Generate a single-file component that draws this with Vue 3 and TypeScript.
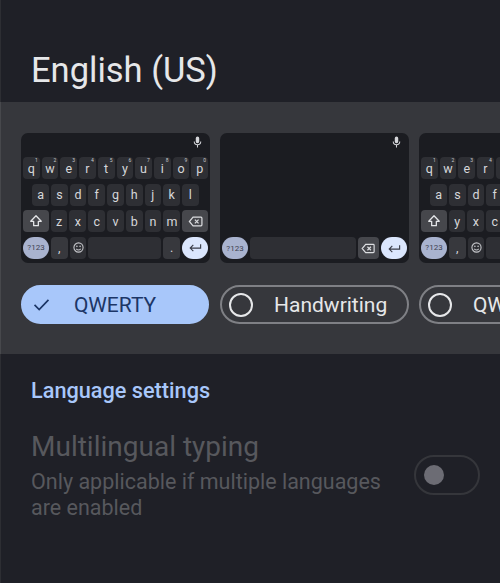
<script setup lang="ts">
type KeyKind = 'char' | 'shift' | 'del' | 'sym' | 'comma' | 'emoji' | 'space' | 'dot' | 'enter'
interface Key { kind: KeyKind; label?: string; hint?: string }

const chars = (s: string, hints = false): Key[] =>
  s.split('').map((c, i) => ({ kind: 'char' as KeyKind, label: c, hint: hints ? String((i + 1) % 10) : undefined }))

const bottomRow: Key[] = [
  { kind: 'sym', label: '?123' },
  { kind: 'comma', label: ',' },
  { kind: 'emoji' },
  { kind: 'space' },
  { kind: 'dot', label: '.' },
  { kind: 'enter' },
]

const qwerty: Key[][] = [
  chars('qwertyuiop', true),
  chars('asdfghjkl'),
  [{ kind: 'shift' }, ...chars('zxcvbnm'), { kind: 'del' }],
  bottomRow,
]
const qwerty2: Key[][] = [
  chars('qwertzuiop', true),
  chars('asdfghjkl'),
  [{ kind: 'shift' }, ...chars('yxcvbnm'), { kind: 'del' }],
  bottomRow,
]

const layouts = [
  { name: 'QWERTY', selected: true, rows: qwerty, hand: false },
  { name: 'Handwriting', selected: false, rows: [] as Key[][], hand: true },
  { name: 'QWERTZ', selected: false, rows: qwerty2, hand: false },
]
</script>

<template>
  <div class="page">
    <h1 class="title">English (US)</h1>

    <section class="panel">
      <div class="layouts">
        <div v-for="l in layouts" :key="l.name" class="layout">
          <div class="kb">
            <div class="kb-top">
              <svg class="mic" viewBox="0 0 24 24" width="13" height="16">
                <path fill="#d5d6da" d="M12 14.5a3.2 3.2 0 0 0 3.2-3.2V5.2a3.2 3.2 0 0 0-6.4 0v6.1a3.2 3.2 0 0 0 3.2 3.2z" />
                <path fill="none" stroke="#d5d6da" stroke-width="1.9" d="M6 11.2a6 6 0 0 0 12 0M12 17.2V22" />
              </svg>
            </div>

            <div v-if="l.hand" class="hand-area">
              <div class="hand-row">
                <div class="k sym">?123</div>
                <div class="k hand-space"></div>
                <div class="k del-small">
                  <svg viewBox="0 0 24 18" width="14" height="11">
                    <path fill="none" stroke="#dcdde0" stroke-width="2" d="M8 2h13a1.5 1.5 0 0 1 1.5 1.5v11A1.5 1.5 0 0 1 21 16H8l-6-7z" />
                    <path fill="none" stroke="#dcdde0" stroke-width="2" d="M11 6l6 6M17 6l-6 6" />
                  </svg>
                </div>
                <div class="k enter">
                  <svg viewBox="0 0 24 16" width="14" height="9">
                    <path fill="none" stroke="#3a3d48" stroke-width="2" d="M22 2v7H4M9 3.5L3.5 9 9 14.5" />
                  </svg>
                </div>
              </div>
            </div>

            <div v-else class="rows">
              <div v-for="(row, ri) in l.rows" :key="ri" class="row" :class="{ inset: ri === 1 }">
                <div v-for="(k, ki) in row" :key="ki" class="k" :class="k.kind">
                  <template v-if="k.kind === 'shift'">
                    <svg viewBox="0 0 24 24" width="14" height="14">
                      <path fill="none" stroke="#e4e5e8" stroke-width="2.2" stroke-linejoin="round" d="M12 3L3 12.5h5V20h8v-7.5h5z" />
                    </svg>
                  </template>
                  <template v-else-if="k.kind === 'del'">
                    <svg viewBox="0 0 24 18" width="15" height="11">
                      <path fill="none" stroke="#dcdde0" stroke-width="2" d="M8 2h13a1.5 1.5 0 0 1 1.5 1.5v11A1.5 1.5 0 0 1 21 16H8l-6-7z" />
                      <path fill="none" stroke="#dcdde0" stroke-width="2" d="M11 6l6 6M17 6l-6 6" />
                    </svg>
                  </template>
                  <template v-else-if="k.kind === 'emoji'">
                    <svg viewBox="0 0 24 24" width="11" height="11">
                      <circle cx="12" cy="12" r="10" fill="none" stroke="#c4c5c9" stroke-width="2.4" />
                      <circle cx="8.5" cy="9.5" r="1.8" fill="#c4c5c9" />
                      <circle cx="15.5" cy="9.5" r="1.8" fill="#c4c5c9" />
                      <path fill="none" stroke="#c4c5c9" stroke-width="2.2" d="M7 15c2.8 2.6 7.2 2.6 10 0" />
                    </svg>
                  </template>
                  <template v-else-if="k.kind === 'enter'">
                    <svg viewBox="0 0 24 16" width="14" height="9">
                      <path fill="none" stroke="#3a3d48" stroke-width="2" d="M22 2v7H4M9 3.5L3.5 9 9 14.5" />
                    </svg>
                  </template>
                  <template v-else>
                    {{ k.label }}
                    <span v-if="k.hint" class="hint">{{ k.hint }}</span>
                  </template>
                </div>
              </div>
            </div>
          </div>

          <div class="chip" :class="{ on: l.selected }">
            <svg v-if="l.selected" class="check" viewBox="0 0 18 14" width="17" height="13">
              <path fill="none" stroke="#1c3666" stroke-width="1.8" d="M1.5 7.5l5 5L16.5 2" />
            </svg>
            <span v-else class="radio"></span>
            <span class="chip-label">{{ l.name }}</span>
          </div>
        </div>
      </div>
    </section>

    <h2 class="section">Language settings</h2>

    <div class="setting">
      <div class="setting-text">
        <div class="setting-title">Multilingual typing</div>
        <div class="setting-desc">Only applicable if multiple languages are enabled</div>
      </div>
      <div class="toggle"><span class="knob"></span></div>
    </div>
  </div>
</template>

<style>
html, body { margin: 0; background: #1f2027; }
</style>

<style scoped>
.page {
  width: 500px;
  height: 583px;
  overflow: hidden;
  box-sizing: border-box;
  background: #1f2027;
  box-shadow: inset 1px 0 0 #2d2e33;
  font-family: Roboto, "Noto Sans", sans-serif;
}
.title {
  margin: 0;
  height: 102px;
  box-sizing: border-box;
  padding: 50px 0 0 31px;
  font-size: 34.5px;
  line-height: 40px;
  font-weight: 400;
  color: #e6e7e9;
}
.panel {
  height: 252px;
  box-sizing: border-box;
  background: #36373c;
  box-shadow: inset 1px 0 0 #47484c;
  padding: 31px 0 0 21px;
  overflow: hidden;
}
.layouts { display: flex; gap: 10px; width: 800px; }
.layout { width: 189px; flex: none; }
.kb {
  height: 130px;
  box-sizing: border-box;
  background: #1b1c21;
  border-radius: 7px;
  padding: 0 2px 4px;
  display: flex;
  flex-direction: column;
}
.kb-top { height: 24px; flex: none; display: flex; justify-content: flex-end; align-items: center; padding: 0 4px 6px 0; box-sizing: border-box; }
.rows { display: flex; flex-direction: column; gap: 4.6px; }
.row { display: flex; gap: 2px; height: 22px; }
.row.inset { padding: 0 9.4px; }
.k {
  position: relative;
  flex: 1 1 0;
  min-width: 0;
  border-radius: 4px;
  background: #2e2f34;
  color: #d6d7da;
  font-size: 12.5px;
  display: flex;
  align-items: center;
  justify-content: center;
}
.hint { position: absolute; top: 0; right: 2px; font-size: 5px; line-height: 7px; color: #c9cacd; }
.shift, .del { flex: 0 0 25.7px; background: #46474c; }
.sym { flex: 0 0 26px; border-radius: 11px; background: #a9b3cf; color: #3e4250; font-size: 8px; }
.comma, .dot { flex: 0 0 16.7px; background: #37383d; }
.emoji { flex: 0 0 16.7px; }
.space { flex: 1 1 0; }
.enter { flex: 0 0 26px; border-radius: 11px; background: #dbe6fd; }
.hand-area { flex: 1; display: flex; align-items: flex-end; }
.hand-row { display: flex; gap: 2px; height: 22px; width: 100%; }
.hand-space { flex: 1 1 0; }
.del-small { flex: 0 0 21.5px; background: #46474c; }
.chip {
  margin-top: 22px;
  height: 39px;
  box-sizing: border-box;
  border: 2px solid #7f8085;
  border-radius: 20px;
  display: flex;
  align-items: center;
  color: #e6e7e9;
  font-size: 21px;
  white-space: nowrap;
  overflow: hidden;
}
.chip.on { background: #a8c7fa; border-color: #a8c7fa; color: #1c3666; width: 188px; }
.radio {
  flex: none;
  width: 24px;
  height: 24px;
  box-sizing: border-box;
  border: 2px solid #e6e7e9;
  border-radius: 50%;
  margin-left: 7px;
}
.check { flex: none; margin-left: 10px; }
.chip-label { margin-left: 21px; }
.chip.on .chip-label { margin-left: 24px; }
.section {
  margin: 0;
  padding: 23px 0 0 31px;
  font-size: 21.7px;
  line-height: 28px;
  font-weight: 500;
  color: #a8c7fa;
}
.setting {
  display: flex;
  align-items: center;
  padding: 24px 20px 0 31px;
  gap: 30px;
}
.setting-text { width: 353px; flex: none; }
.setting-title { font-size: 28px; line-height: 36px; color: #57585d; }
.setting-desc { font-size: 21.5px; line-height: 26px; color: #57585d; margin-top: 4px; }
.toggle {
  width: 66px;
  height: 40px;
  box-sizing: border-box;
  border: 2px solid #35363b;
  border-radius: 20px;
  display: flex;
  align-items: center;
  padding-left: 8px;
  flex: none;
}
.knob { width: 20px; height: 20px; border-radius: 50%; background: #6c6c74; }
</style>
